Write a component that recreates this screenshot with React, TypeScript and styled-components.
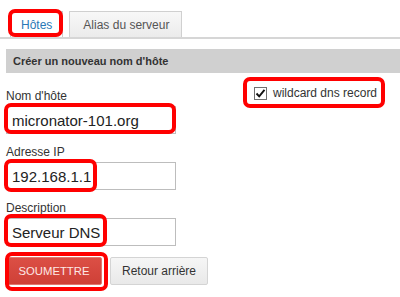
import React from "react";
import styled, { createGlobalStyle } from "styled-components";

const Global = createGlobalStyle`
  html, body { margin: 0; padding: 0; background: #fff; }
  body { font-family: "Liberation Sans", Arial, sans-serif; color: #333; }
`;

const Page = styled.div`
  width: 400px;
  height: 297px;
  overflow: hidden;
  position: relative;
`;

const Mark = styled.span<{ $t: number; $l: number; $w: number; $h: number }>`
  position: absolute;
  top: ${(p) => p.$t}px;
  left: ${(p) => p.$l}px;
  width: ${(p) => p.$w}px;
  height: ${(p) => p.$h}px;
  box-sizing: border-box;
  border: 4px solid #ff0000;
  border-radius: 7px;
  pointer-events: none;
`;

const TabBar = styled.div`
  display: flex;
  align-items: flex-end;
  gap: 6px;
  padding: 11px 0 0 10px;
  height: 26px;
  border-bottom: 2px solid #d6d6d6;
`;

const Tab = styled.div<{ $active?: boolean }>`
  position: relative;
  height: 26px;
  box-sizing: border-box;
  display: flex;
  align-items: center;
  padding: 0 ${(p) => (p.$active ? "10px" : "12px")} 0 ${(p) => (p.$active ? "10px" : "13px")};
  font-size: 12px;
  color: ${(p) => (p.$active ? "#2a79b6" : "#555")};
  background: ${(p) => (p.$active ? "#fff" : "linear-gradient(#f8f8f8, #ebebeb)")};
  border: 1px solid ${(p) => (p.$active ? "#ccc" : "#d0d0d0")};
  border-bottom: none;
`;

const SectionTitle = styled.div`
  margin: 10px 0 0 6px;
  height: 24px;
  display: flex;
  align-items: center;
  padding-left: 7px;
  background: #d0d0d0;
  font-size: 11px;
  font-weight: bold;
  color: #333;
`;

const FormRow = styled.div`
  display: grid;
  grid-template-columns: 170px auto;
  padding-left: 6px;
`;

const Fields = styled.div`
  display: flex;
  flex-direction: column;
  padding-top: 16px;
  gap: 11px;
`;

const Field = styled.div`
  display: flex;
  flex-direction: column;
  gap: 3px;
`;

const Label = styled.label`
  font-size: 12px;
  line-height: 14px;
  color: #333;
`;

const InputWrap = styled.div`
  position: relative;
  width: 170px;
  height: 28px;
`;

const Input = styled.input`
  box-sizing: border-box;
  width: 170px;
  height: 28px;
  border: 1px solid #bdbdbd;
  padding: 0 0 0 5px;
  margin: 0;
  font-family: "Liberation Sans", Arial, sans-serif;
  font-size: 15px;
  color: #222;
  outline: none;
  background: #fff;
`;

const CheckCol = styled.div`
  padding: 13px 0 0 78px;
`;

const CheckRow = styled.label`
  position: relative;
  display: flex;
  align-items: center;
  gap: 6px;
  font-size: 12px;
  color: #333;
  height: 14px;
`;

const Box = styled.span`
  width: 13px;
  height: 13px;
  box-sizing: border-box;
  border: 1px solid #707070;
  background: #fff;
  display: flex;
  align-items: center;
  justify-content: center;
`;

const Buttons = styled.div`
  display: flex;
  gap: 8px;
  padding: 11px 0 0 6px;
`;

const Button = styled.button<{ $primary?: boolean }>`
  position: relative;
  box-sizing: border-box;
  height: 28px;
  width: ${(p) => (p.$primary ? "96px" : "98px")};
  margin: 0;
  padding: 0;
  font-family: "Liberation Sans", Arial, sans-serif;
  font-size: ${(p) => (p.$primary ? "11.3px" : "12px")};
  color: ${(p) => (p.$primary ? "#fde8e6" : "#333")};
  background: ${(p) => (p.$primary ? "linear-gradient(#dc4f45, #cf4037)" : "linear-gradient(#f6f6f6, #e9e9e9)")};
  border: 1px solid ${(p) => (p.$primary ? "#e2776f" : "#d4d4d4")};
  border-radius: 2px;
`;

export default function App() {
  return (
    <Page>
      <Global />
      <TabBar>
        <Tab $active>
          Hôtes
          <Mark $t={-3} $l={-3} $w={55} $h={28} />
        </Tab>
        <Tab>Alias du serveur</Tab>
      </TabBar>
      <SectionTitle>Créer un nouveau nom d'hôte</SectionTitle>
      <FormRow>
        <Fields>
          <Field>
            <Label>Nom d'hôte</Label>
            <InputWrap>
              <Input defaultValue="micronator-101.org" />
              <Mark $t={-3} $l={-2} $w={172} $h={31} />
            </InputWrap>
          </Field>
          <Field>
            <Label>Adresse IP</Label>
            <InputWrap>
              <Input defaultValue="192.168.1.1" />
              <Mark $t={-3} $l={-2} $w={93} $h={33} />
            </InputWrap>
          </Field>
          <Field>
            <Label>Description</Label>
            <InputWrap>
              <Input defaultValue="Serveur DNS" />
              <Mark $t={-4} $l={-2} $w={103} $h={33} />
            </InputWrap>
          </Field>
        </Fields>
        <CheckCol>
          <CheckRow>
            <Box>
              <svg width="11" height="11" viewBox="0 0 11 11">
                <path d="M1.5 5.5 L4.2 8.3 L9.5 1.8" fill="none" stroke="#111" strokeWidth="1.9" />
              </svg>
            </Box>
            wildcard dns record
            <Mark $t={-9} $l={-11} $w={142} $h={31} />
          </CheckRow>
        </CheckCol>
      </FormRow>
      <Buttons>
        <Button $primary>
          SOUMETTRE
          <Mark $t={-6} $l={-2} $w={103} $h={39} />
        </Button>
        <Button>Retour arrière</Button>
      </Buttons>
    </Page>
  );
}
